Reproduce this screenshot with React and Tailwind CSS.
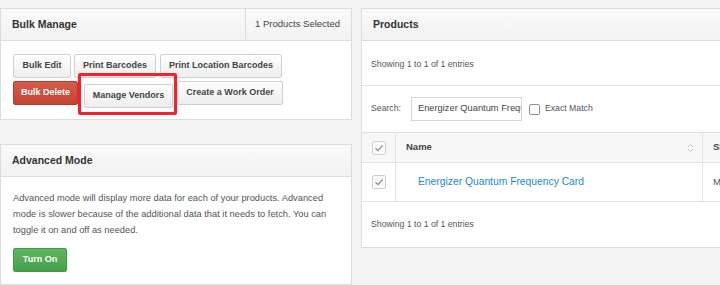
import React from 'react';

const Btn = ({ children, className = '' }) => (
    <button className={`h-[24px] px-0 whitespace-nowrap border border-[#cfcfcf] bg-gradient-to-b from-white to-[#ededed] text-[9px] font-bold text-[#444] rounded-[2px] ${className}`}>
        {children}
    </button>
);

const Check = ({ checked }) => (
    <span className="w-[14px] h-[14px] border border-[#cfcfcf] bg-[#fafafa] rounded-[2px] flex items-center justify-center">
        {checked && (
            <svg width="10" height="10" viewBox="0 0 10 10" fill="none" stroke="#8a8a8a" strokeWidth="1.2">
                <path d="M1.5 5.2 L4 7.6 L8.6 2.4" />
            </svg>
        )}
    </span>
);

const Panel = ({ title, right, children, className = '' }) => (
    <div className={`border border-[#dcdcdc] bg-white ${className}`}>
        <div className="h-[32px] flex items-stretch bg-gradient-to-b from-[#fafafa] to-[#f2f2f2] border-b border-[#dcdcdc]">
            <div className="flex-1 flex items-center pl-[11px] text-[10.5px] font-bold text-[#333]">{title}</div>
            {right && (
                <div className="w-[106px] border-l border-[#dcdcdc] flex items-center pl-[9px] text-[9.5px] text-[#444]">{right}</div>
            )}
        </div>
        {children}
    </div>
);

const App = () => {
    return (
        <div className="w-[720px] h-[285px] overflow-hidden bg-[#f4f4f4] flex gap-[9px] pt-[8px] font-['Liberation_Sans',Arial,sans-serif]">
            <div className="w-[352px] shrink-0 flex flex-col gap-[24px]">
                <Panel title="Bulk Manage" right="1 Products Selected">
                    <div className="h-[78px] pt-[13px] pl-[12px] flex flex-col gap-[3px]">
                        <div className="flex">
                            <Btn className="w-[58px]">Bulk Edit</Btn>
                            <Btn className="w-[82px] ml-[3px]">Print Barcodes</Btn>
                            <Btn className="w-[122px] ml-[4px]">Print Location Barcodes</Btn>
                        </div>
                        <div className="flex">
                            <button className="h-[24px] w-[65px] whitespace-nowrap border border-[#b93d2f] bg-gradient-to-b from-[#d75b4b] to-[#c14434] text-[9px] font-bold text-white rounded-[2px]">
                                Bulk Delete
                            </button>
                            <div className="relative ml-[6px]">
                                <Btn className="w-[89px]">Manage Vendors</Btn>
                                <div className="absolute left-[-6px] right-[-4px] top-[-8px] bottom-[-7px] border-[3px] border-[#f5222d] rounded-[2px]" />
                            </div>
                            <Btn className="w-[106px] ml-[4px]">Create a Work Order</Btn>
                        </div>
                    </div>
                </Panel>
                <Panel title="Advanced Mode">
                    <div className="pt-[13px] pl-[12px] pr-[10px] pb-[12px]">
                        <p className="text-[9.3px] leading-[16px] text-[#555]">
                            Advanced mode will display more data for each of your products. Advanced mode is slower because of the additional data that it needs to fetch. You can toggle it on and off as needed.
                        </p>
                        <button className="mt-[10px] h-[24px] w-[54px] whitespace-nowrap border border-[#3f9a44] bg-gradient-to-b from-[#5cb561] to-[#46a04b] text-[9px] font-bold text-white rounded-[2px]">
                            Turn On
                        </button>
                    </div>
                </Panel>
            </div>

            <div className="w-[400px] shrink-0 self-start">
                <Panel title="Products">
                    <div className="h-[45px] flex items-center pl-[9px] pt-[3px] text-[8.7px] text-[#555] border-b border-[#e3e3e3]">
                        Showing 1 to 1 of 1 entries
                    </div>
                    <div className="h-[46px] flex items-center pl-[9px] text-[8.7px] text-[#555]">
                        <span>Search:</span>
                        <div className="ml-[10px] w-[111px] h-[24px] border border-[#d6d6d6] bg-white flex items-center pl-[6px] overflow-hidden whitespace-nowrap text-[9.3px] text-[#444]">
                            Energizer Quantum Frequency Card
                        </div>
                        <span className="ml-[7px] w-[11px] h-[11px] border border-[#8f8f8f] rounded-[2px] bg-white" />
                        <span className="ml-[5px]">Exact Match</span>
                    </div>
                    <div className="border-t border-[#e0e0e0]">
                        <div className="h-[30px] flex bg-[#f7f7f7] border-b border-[#e3e3e3]">
                            <div className="w-[34px] flex items-center justify-center border-r border-[#e3e3e3]">
                                <Check checked />
                            </div>
                            <div className="w-[307px] flex items-center justify-between pl-[10px] pr-[8px] border-r border-[#e3e3e3] text-[9.5px] font-bold text-[#444]">
                                <span>Name</span>
                                <svg width="7" height="10" viewBox="0 0 7 10" fill="none" stroke="#c4c4c4" strokeWidth="1">
                                    <path d="M1 4 L3.5 1.5 L6 4" />
                                    <path d="M1 6 L3.5 8.5 L6 6" />
                                </svg>
                            </div>
                            <div className="flex items-center pl-[10px] text-[9.5px] font-bold text-[#444]">SKU</div>
                        </div>
                        <div className="h-[39px] flex border-b border-[#e3e3e3]">
                            <div className="w-[34px] flex items-center justify-center border-r border-[#e3e3e3]">
                                <Check checked />
                            </div>
                            <div className="w-[307px] flex items-center pl-[22px] border-r border-[#e3e3e3] text-[10.3px] text-[#1a8ad6]">
                                Energizer Quantum Frequency Card
                            </div>
                            <div className="flex items-center pl-[10px] text-[9.5px] text-[#555]">MX</div>
                        </div>
                    </div>
                    <div className="h-[45px] flex items-center pl-[9px] text-[8.7px] text-[#555]">
                        Showing 1 to 1 of 1 entries
                    </div>
                </Panel>
            </div>
        </div>
    );
};

export default App;
